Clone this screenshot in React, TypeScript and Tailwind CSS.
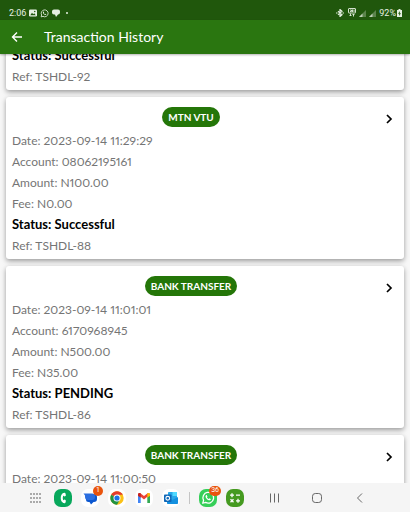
import React from "react";

type Transaction = {
  id: string;
  kind?: string;
  details: string[];
  status: string;
};

const transactions: Transaction[] = [
  { id: "TSHDL-92", details: [], status: "Successful" },
  {
    id: "TSHDL-88",
    kind: "MTN VTU",
    details: ["Date: 2023-09-14 11:29:29", "Account: 08062195161", "Amount: N100.00", "Fee: N0.00"],
    status: "Successful",
  },
  {
    id: "TSHDL-86",
    kind: "BANK TRANSFER",
    details: ["Date: 2023-09-14 11:01:01", "Account: 6170968945", "Amount: N500.00", "Fee: N35.00"],
    status: "PENDING",
  },
  {
    id: "TSHDL-85",
    kind: "BANK TRANSFER",
    details: ["Date: 2023-09-14 11:00:50"],
    status: "",
  },
];

function WhatsAppGlyph({ className }: { className: string }) {
  return (
    <svg viewBox="0 0 24 24" className={className} fill="none" stroke="currentColor" strokeWidth="2.2">
      <path d="M3 21l1.4-5A9.2 9.2 0 1 1 8 19.6L3 21z" strokeLinejoin="round" />
      <path
        d="M8.6 7.2c-1.6 1.4-.9 3.8 1 5.9 2 2.2 4.7 3.5 6.4 2.4.9-.6.9-1.5.7-1.8l-2.2-1.1-1.2 1.2c-1.3-.4-2.6-1.7-3.1-2.9l.9-1.2-.9-2.2c-.3-.5-1-.7-1.6-.3z"
        fill="currentColor"
        stroke="none"
      />
    </svg>
  );
}

function StatusBar() {
  return (
    <div className="flex h-5 shrink-0 items-end justify-between bg-[#20570c] pr-2 pl-[9px] text-[#e6efe2]">
      <div className="flex h-[14px] items-center gap-[3px]">
        <span className="font-[Roboto,sans-serif] text-[9px] leading-[14px]">2:06</span>
        <svg viewBox="0 0 16 16" className="size-2">
          <rect x="0" y="1" width="16" height="14" rx="2.5" fill="currentColor" />
          <path d="M2.5 12.5l3.5-5 2.5 3 2-2 3 4z" fill="#20570c" />
          <circle cx="11.5" cy="5" r="1.5" fill="#20570c" />
        </svg>
        <WhatsAppGlyph className="size-[9px]" />
        <svg viewBox="0 0 16 16" className="size-2" fill="currentColor">
          <path d="M4 1h8a4 4 0 0 1 4 4v2a4 4 0 0 1-4 4l-4 5-2-5H4a4 4 0 0 1-4-4V5a4 4 0 0 1 4-4z" />
        </svg>
        <span className="ml-[3px] size-[2px] rounded-full bg-current" />
      </div>
      <div className="flex h-[14px] items-center gap-[3px]">
        <svg viewBox="0 0 16 16" className="mr-px size-2" fill="none" stroke="currentColor" strokeWidth="2.4">
          <path d="M4 4.5l8 7L8 15V1l4 3.5-8 7M0 8h3M13 8h3" />
        </svg>
        <svg viewBox="0 0 16 18" className="mb-[2px] h-[9px] w-2" fill="none" stroke="currentColor" strokeWidth="1.8">
          <rect x="1" y="1" width="14" height="9" rx="1" />
          <path d="M4 4h3v3H4M9 3v5M12 3v5M5 11v5M3 14l2 2 2-2M11 17v-5M9 14l2-2 2 2" />
        </svg>
        {[0, 1].map((n) => (
          <svg key={n} viewBox="0 0 16 16" className="size-[7px]" fill="currentColor">
            <path d="M0 16L16 0v16z" opacity=".3" />
            <path d="M0 16l8-8v8z" opacity=".7" />
          </svg>
        ))}
        <span className="font-[Roboto,sans-serif] text-[9px] leading-[14px]">92%</span>
        <svg viewBox="0 0 10 16" className="-ml-[2px] h-2 w-[5px]">
          <path d="M3 0h4v2h3v14H0V2h3z" fill="currentColor" />
          <path d="M6 4L2 9.5h2.500L4 14l4-5.500H5.500z" fill="#20570c" />
        </svg>
      </div>
    </div>
  );
}

function TransactionCard({ item }: { item: Transaction }) {
  return (
    <li className="rounded-[3px] bg-white px-[6px] pb-[3px] shadow-[0_2px_5px_rgba(0,0,0,0.38)]">
      {item.kind && (
        <div className="flex items-start pt-[10px]">
          <div className="flex flex-1 justify-center">
            <span className="rounded-full bg-[#247608] px-[6px] text-[10px] leading-5 font-bold text-white">
              {item.kind}
            </span>
          </div>
          <button type="button" aria-label="View transaction" className="flex h-[23px] w-7 items-center justify-end text-black">
            <svg viewBox="0 0 18 18" className="size-[18px]" fill="none" stroke="currentColor" strokeWidth="1.7">
              <path d="M7 5l4 4-4 4" />
            </svg>
          </button>
        </div>
      )}
      <div className="text-[12px] leading-[21px] text-[#757575] proportional-nums">
        {item.details.map((line) => (
          <p key={line}>{line}</p>
        ))}
        {item.status && (
          <>
            <p className="text-[13px] leading-[21px] font-bold text-black">Status: {item.status}</p>
            <p>Ref: {item.id}</p>
          </>
        )}
      </div>
    </li>
  );
}

function Badge({ children }: { children: React.ReactNode }) {
  return (
    <span className="absolute -top-[3px] -right-1 flex h-[10px] min-w-[10px] items-center justify-center rounded-full bg-[#e9540d] px-[2px] font-[Roboto,sans-serif] text-[7px] leading-none text-white">
      {children}
    </span>
  );
}

function NavBar() {
  const app = "relative flex size-[18px] items-center justify-center rounded-[7px]";
  return (
    <nav className="z-10 flex h-[29px] shrink-0 items-center justify-between bg-[#f5f5f5] pr-[41px] pl-[27px]">
      <div className="flex items-center gap-[9px]">
        <button type="button" aria-label="All apps" className={app}>
          <svg viewBox="0 0 18 18" className="size-[18px]" fill="#4b4b4b">
            {[5, 9, 13].map((y) => [4, 7, 10, 13].map((x) => <circle key={`${x}-${y}`} cx={x} cy={y} r=".8" />))}
          </svg>
        </button>
        <button type="button" aria-label="Phone" className={`${app} bg-[#08a85c]`}>
          <svg viewBox="0 0 18 18" className="size-[18px]" fill="none" stroke="#fff" strokeLinecap="round">
            <path d="M10.500 4.800C6.800 5.500 6.800 12.500 10.500 13.200" strokeWidth="2" />
            <path d="M10 5.300l.6.700M10 12.700l.6-.7" strokeWidth="2.6" />
          </svg>
        </button>
        <button type="button" aria-label="Messages" className={`${app} bg-white`}>
          <svg viewBox="0 0 18 18" className="size-[18px]">
            <path d="M7.500 5H13a3 3 0 0 1 3 3v2a3 3 0 0 1-3 3h-.5L10 15.500 8.500 13H7.500a2.500 2.500 0 0 1-2.500-2.500v-3z" fill="#0b57d0" />
            <path d="M2.500 4.500H11a3 3 0 0 1 3 3V8a3 3 0 0 1-3 3H7a3 3 0 0 1-3-3V6.500z" fill="#2c6fe0" />
          </svg>
          <Badge>1</Badge>
        </button>
        <button type="button" aria-label="Chrome" className={`${app} bg-white`}>
          <svg viewBox="0 0 18 18" className="size-[18px]">
            <circle cx="9" cy="9" r="6.7" fill="#fbc116" />
            <path d="M9 9L3.200 5.650A6.700 6.700 0 0 1 14.800 5.650H9z" fill="#e33b2e" />
            <path d="M3.200 5.650A6.700 6.700 0 0 0 9 15.700L11.900 10.700 9 9z" fill="#229342" />
            <circle cx="9" cy="9" r="3.5" fill="#fff" />
            <circle cx="9" cy="9" r="2.6" fill="#1a73e8" />
          </svg>
        </button>
        <button type="button" aria-label="Gmail" className={`${app} bg-white`}>
          <svg viewBox="0 0 18 18" className="size-[18px]">
            <path d="M3 5v9h2.700V7z" fill="#4285f4" />
            <path d="M15 5v9h-2.700V7z" fill="#34a853" />
            <path d="M3 5.500C3 4 4.600 3.500 5.700 4.400L9 7l3.300-2.600C13.400 3.500 15 4 15 5.500L9 10.400z" fill="#ea4335" />
            <path d="M15 5.500v1.200l-2.700 2.100V4.400C13.400 3.500 15 4 15 5.500z" fill="#fbbc04" />
            <path d="M3 5.500v1.200l2.700 2.100V4.400C4.600 3.500 3 4 3 5.500z" fill="#c5221f" />
          </svg>
        </button>
        <button type="button" aria-label="Outlook" className={`${app} bg-white`}>
          <svg viewBox="0 0 18 18" className="size-[18px]">
            <rect x="6" y="3" width="9" height="8" rx=".8" fill="#28a8ea" />
            <path d="M10.500 3H15v4h-4.500z" fill="#50d9ff" />
            <path d="M5 8l5.500 3L16 8v6c0 .6-.4 1-1 1H6c-.6 0-1-.4-1-1z" fill="#1490df" />
            <rect x="2" y="5.500" width="7.500" height="7.500" rx=".8" fill="#0f68b8" />
            <circle cx="5.750" cy="9.250" r="1.9" fill="none" stroke="#fff" strokeWidth="1.1" />
          </svg>
        </button>
        <div className="h-3 w-px bg-[#c4c4c4]" />
        <button type="button" aria-label="WhatsApp" className={`${app} bg-[#35cf58] text-white`}>
          <WhatsAppGlyph className="size-[14px]" />
          <Badge>36</Badge>
        </button>
        <button type="button" aria-label="Calculator" className={`${app} bg-[#459a20]`}>
          <svg viewBox="0 0 18 18" className="size-[18px]" fill="none" stroke="#fff" strokeWidth="1.3">
            <path d="M4 6.200h4M6 4.200v4M10 6.200h4M4.500 10.300l3 3M7.500 10.300l-3 3M10 11.800h4M12 9.800v4" />
          </svg>
        </button>
      </div>
      <div className="flex items-center gap-[25px] text-[#686868]">
        <button type="button" aria-label="Recent apps" className={app}>
          <svg viewBox="0 0 18 18" className="size-[18px]" fill="none" stroke="currentColor">
            <path d="M5.500 4.500v9M9.500 4.500v9M13.500 4.500v9" />
          </svg>
        </button>
        <button type="button" aria-label="Home" className={app}>
          <svg viewBox="0 0 18 18" className="size-[18px]" fill="none" stroke="currentColor">
            <rect x="4.500" y="4.500" width="9" height="9" rx="2.8" />
          </svg>
        </button>
        <button type="button" aria-label="Back" className={app}>
          <svg viewBox="0 0 18 18" className="size-[18px]" fill="none" stroke="currentColor">
            <path d="M11 4.500L6.500 9l4.500 4.500" />
          </svg>
        </button>
      </div>
    </nav>
  );
}

export default function App() {
  return (
    <div className="flex h-screen flex-col overflow-hidden bg-[#f7f7f7] font-[Lato,sans-serif]">
      <StatusBar />
      <header className="z-10 flex h-[34px] shrink-0 items-center gap-[18px] bg-[#2a7610] px-2 text-white shadow-[0_1px_2px_rgba(0,0,0,0.3)]">
        <button type="button" aria-label="Go back" className="flex size-[18px] items-center justify-center">
          <svg viewBox="0 0 18 18" className="size-[18px]" fill="none" stroke="currentColor" strokeWidth="1.4">
            <path d="M14 9H5M9 4.500L4.500 9 9 13.500" />
          </svg>
        </button>
        <h1 className="text-[14px] leading-5">Transaction History</h1>
      </header>
      <main className="min-h-0 flex-1 overflow-hidden px-[6px]">
        <ul className="-mt-[9px] flex flex-col gap-[7px]">
          {transactions.map((item) => (
            <TransactionCard key={item.id} item={item} />
          ))}
        </ul>
      </main>
      <NavBar />
    </div>
  );
}
